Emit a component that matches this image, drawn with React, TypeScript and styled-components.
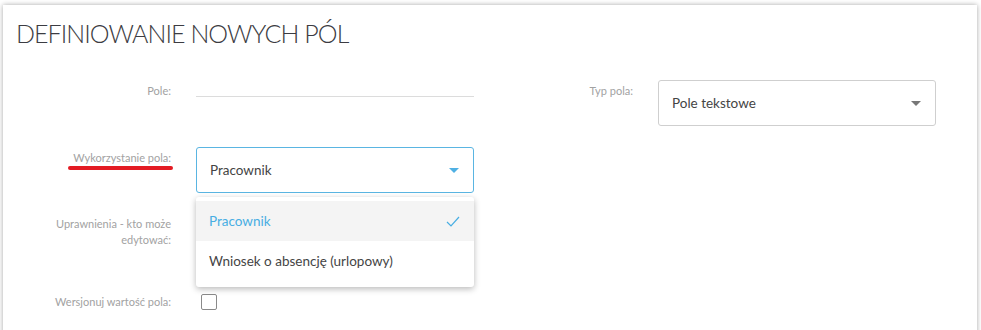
import React from "react";
import styled, { createGlobalStyle } from "styled-components";

const Global = createGlobalStyle`
  html, body { margin: 0; padding: 0; background: #ffffff; }
  body { font-family: Lato, "Open Sans", Arial, sans-serif; overflow: hidden; }
  * { box-sizing: border-box; }
`;

const Card = styled.div`
  margin: 5px 4px 0 3px;
  min-height: 400px;
  background: #fff;
  box-shadow: 0 0 5px rgba(0, 0, 0, 0.35);
  padding: 13px 13px 0 13px;
`;

const Title = styled.h1`
  margin: 0;
  font-family: Lato, Arial, sans-serif;
  font-weight: 300;
  font-size: 25px;
  line-height: 30px;
  color: #3c3c42;
  letter-spacing: -0.95px;
`;

const Form = styled.div`
  margin-top: 32px;
  display: flex;
  flex-direction: column;
  gap: 21px;
`;

const Row = styled.div<{ $mt?: number }>`
  display: flex;
  gap: 4px;
  margin-top: ${(p) => p.$mt ?? 0}px;
`;

const Field = styled.div<{ $center?: boolean }>`
  display: grid;
  grid-template-columns: 155px 278px;
  column-gap: 25px;
  align-items: ${(p) => (p.$center ? "center" : "start")};
  position: relative;
`;

const Label = styled.div<{ $pt?: number; $lh?: number }>`
  text-align: right;
  font-size: 11px;
  line-height: ${(p) => p.$lh ?? 17}px;
  color: #a2a2a2;
  padding-top: ${(p) => p.$pt ?? 2}px;
`;

const Marked = styled.span`
  position: relative;
  &::after {
    content: "";
    position: absolute;
    left: -5px;
    right: -2px;
    bottom: -6px;
    height: 4px;
    border-radius: 2px;
    background: #e31b23;
  }
`;

const TextInput = styled.div`
  height: 17px;
  border-bottom: 1px solid #dcdcdc;
`;

const Select = styled.div<{ $active?: boolean }>`
  height: 46px;
  border: 1px solid ${(p) => (p.$active ? "#5ab5e2" : "#cfcfcf")};
  border-radius: 3px;
  display: flex;
  align-items: center;
  justify-content: space-between;
  padding: 0 13px 0 13px;
  font-size: 13.5px;
  color: #444;
  background: #fff;
`;

const Caret = styled.span<{ $active?: boolean }>`
  width: 0;
  height: 0;
  border-left: 5px solid transparent;
  border-right: 5px solid transparent;
  border-top: 5px solid ${(p) => (p.$active ? "#4fb0e3" : "#777")};
  margin-right: 1px;
`;

const Menu = styled.div`
  position: absolute;
  top: 50px;
  left: 180px;
  width: 278px;
  background: #fff;
  border-radius: 3px;
  box-shadow: 0 2px 6px rgba(0, 0, 0, 0.28);
  padding: 4px 0 6px;
  z-index: 5;
`;

const Option = styled.div<{ $selected?: boolean }>`
  height: 40px;
  display: flex;
  align-items: center;
  justify-content: space-between;
  padding: 0 14px 0 13px;
  font-size: 13.5px;
  color: ${(p) => (p.$selected ? "#48aee3" : "#444")};
  background: ${(p) => (p.$selected ? "#f4f4f4" : "#fff")};
`;

const Checkbox = styled.div`
  width: 16px;
  height: 16px;
  border: 1px solid #8a8a8a;
  border-radius: 2px;
  margin-left: 5px;
`;

const Spacer = styled.div`
  height: 43px;
`;

const Check = () => (
  <svg width="14" height="11" viewBox="0 0 14 11" fill="none">
    <path d="M1 6 L5 10 L13 1" stroke="#48aee3" strokeWidth="1.2" />
  </svg>
);

export default function App() {
  return (
    <>
      <Global />
      <Card>
        <Title>DEFINIOWANIE NOWYCH PÓL</Title>
        <Form>
          <Row>
            <Field>
              <Label>Pole:</Label>
              <TextInput />
            </Field>
            <Field>
              <Label>Typ pola:</Label>
              <Select>
                Pole tekstowe
                <Caret />
              </Select>
            </Field>
          </Row>
          <Row>
            <Field>
              <Label>
                <Marked>Wykorzystanie pola:</Marked>
              </Label>
              <Select $active>
                Pracownik
                <Caret $active />
              </Select>
              <Menu>
                <Option $selected>
                  Pracownik
                  <Check />
                </Option>
                <Option>Wniosek o absencję (urlopowy)</Option>
              </Menu>
            </Field>
          </Row>
          <Row>
            <Field>
              <Label $pt={2} $lh={16}>Uprawnienia - kto może edytować:</Label>
              <Spacer />
            </Field>
          </Row>
          <Row $mt={15}>
            <Field $center>
              <Label $pt={0}>Wersjonuj wartość pola:</Label>
              <Checkbox />
            </Field>
          </Row>
        </Form>
      </Card>
    </>
  );
}
